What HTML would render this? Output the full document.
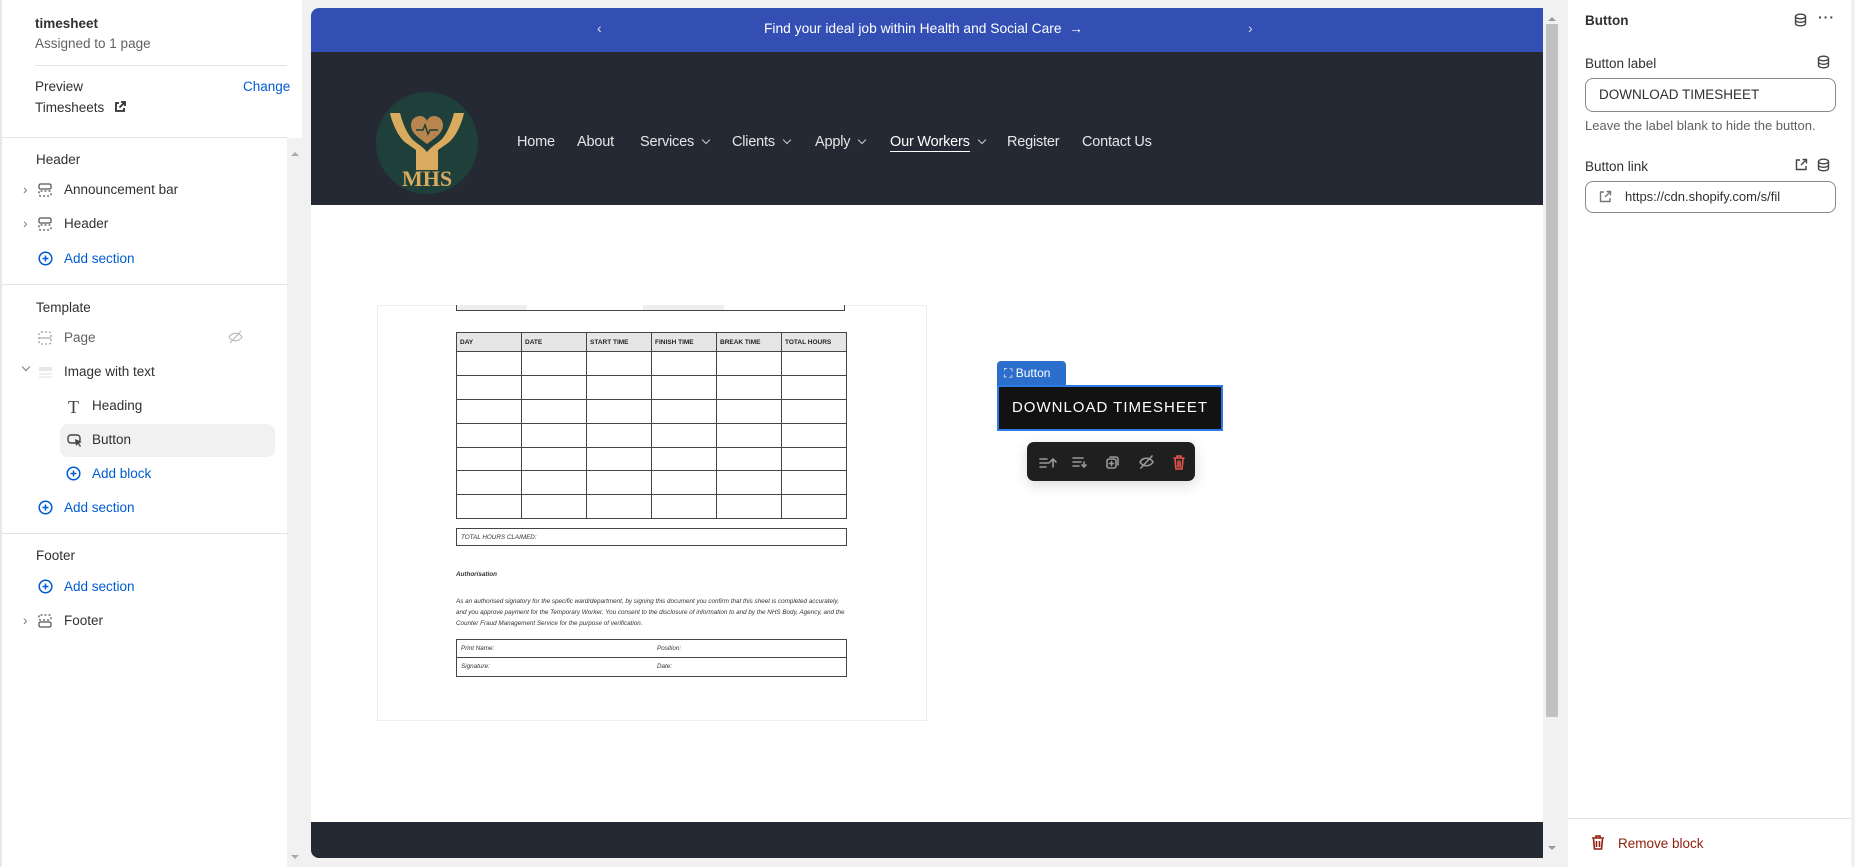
<!DOCTYPE html>
<html><head><meta charset="utf-8"><style>
*{box-sizing:border-box;margin:0;padding:0}
body{width:1855px;height:867px;background:#f1f1f1;font-family:"Liberation Sans",sans-serif;position:relative;overflow:hidden;color:#303030}
.a{position:absolute}
.lp{left:0;top:0;width:302px;height:867px;background:#fff;border-left:2px solid #e8e8e8}
.t{font-size:13.5px;white-space:nowrap;line-height:16px}
.blue{color:#005bd3}
.hr{height:1px;background:#e3e3e3}
.nav{color:#e6e6e6;font-size:14.5px;top:134px;white-space:nowrap;letter-spacing:-.2px}
.chev{display:inline-block;width:6px;height:6px;border-right:1px solid #ccc;border-bottom:1px solid #ccc;transform:rotate(45deg);margin-left:9px;position:relative;top:-3px}
table{border-collapse:collapse}
.tb td{border:1.3px solid #444;height:23.9px;width:54.8px;font-size:6.5px;font-weight:bold;padding-left:3px;color:#222}
.tb tr:first-child td{background:#e6e6e6;height:19px}
.it{font-style:italic;font-size:6.3px;color:#333}
</style></head><body>

<!-- left panel -->
<div class="a lp">
 <div class="a t" style="left:33px;top:16px;font-weight:bold;color:#303030">timesheet</div>
 <div class="a t" style="left:33px;top:36px;color:#616161">Assigned to 1 page</div>
 <div class="a hr" style="left:33px;top:65px;width:252px"></div>
 <div class="a t" style="left:33px;top:79px">Preview</div>
 <div class="a t blue" style="left:241px;top:79px">Change</div>
 <div class="a t" style="left:33px;top:100px">Timesheets <svg width="12" height="12" viewBox="0 0 12 12" style="margin-left:6px;vertical-align:-1px"><path d="M5 2H2v8h8V7M7 1h4v4M11 1L5.5 6.5" stroke="#303030" stroke-width="1.8" fill="none"/></svg></div>
 <div class="a hr" style="left:0;top:137px;width:285px"></div>
 <div class="a" style="left:285px;top:138px;width:17px;height:729px;background:#f1f1f1"></div>
 <div class="a" style="left:289px;top:148px;border:4px solid transparent;border-bottom:4px solid #aaa"></div>
 <div class="a" style="left:289px;top:855px;border:4px solid transparent;border-top:4px solid #aaa"></div>

 <div class="a t" style="left:34px;top:152px">Header</div>
 <div class="a t" style="left:21px;top:182px;color:#777">›</div>
 <svg class="a" style="left:36px;top:183px" width="14" height="14"><rect x="1" y="1" width="12" height="5" rx="1.5" fill="none" stroke="#555" stroke-width="1.3"/><rect x="1" y="8" width="12" height="5" rx="1.5" fill="none" stroke="#555" stroke-width="1.3" stroke-dasharray="2 2"/></svg>
 <div class="a t" style="left:62px;top:182px">Announcement bar</div>
 <div class="a t" style="left:21px;top:216px;color:#777">›</div>
 <svg class="a" style="left:36px;top:217px" width="14" height="14"><rect x="1" y="1" width="12" height="5" rx="1.5" fill="none" stroke="#555" stroke-width="1.3"/><rect x="1" y="8" width="12" height="5" rx="1.5" fill="none" stroke="#555" stroke-width="1.3" stroke-dasharray="2 2"/></svg>
 <div class="a t" style="left:62px;top:216px">Header</div>
 <svg class="a" style="left:36px;top:251px" width="15" height="15"><circle cx="7.5" cy="7.5" r="6.3" fill="none" stroke="#005bd3" stroke-width="1.5"/><path d="M7.5 4.5v6M4.5 7.5h6" stroke="#005bd3" stroke-width="1.5"/></svg>
 <div class="a t blue" style="left:62px;top:251px">Add section</div>
 <div class="a hr" style="left:0;top:284px;width:285px"></div>

 <div class="a t" style="left:34px;top:300px">Template</div>
 <svg class="a" style="left:36px;top:331px" width="14" height="14"><rect x="1" y="1" width="12" height="12" rx="2" fill="none" stroke="#999" stroke-width="1.2" stroke-dasharray="2 2"/><path d="M1 7h12" stroke="#999"/></svg>
 <div class="a t" style="left:62px;top:330px;color:#616161">Page</div>
 <svg class="a" style="left:226px;top:330px" width="15" height="14"><path d="M1 7c3-5 10-5 13 0c-3 5-10 5-13 0z" fill="none" stroke="#bbb" stroke-width="1.2"/><path d="M2 13L13 1" stroke="#bbb" stroke-width="1.2"/></svg>
 <div class="a" style="left:21px;top:364px;width:6px;height:6px;border-right:1.3px solid #777;border-bottom:1.3px solid #777;transform:rotate(45deg)"></div>
 <svg class="a" style="left:36px;top:366px" width="15" height="14"><rect x="1" y="1" width="13" height="4" fill="#e6e6e6"/><path d="M1 8h13M1 11h13" stroke="#ddd"/></svg>
 <div class="a t" style="left:62px;top:364px">Image with text</div>
 <div class="a" style="left:66px;top:397px;font-family:'Liberation Serif',serif;font-size:18px;color:#444">T</div>
 <div class="a t" style="left:90px;top:398px">Heading</div>
 <div class="a" style="left:58px;top:424px;width:215px;height:33px;background:#f1f1f1;border-radius:8px"></div>
 <svg class="a" style="left:65px;top:433px" width="16" height="15"><rect x="1" y="2" width="12" height="8" rx="3" fill="none" stroke="#444" stroke-width="1.4"/><path d="M8 6l7 3-3 1 2 3-1 1-2-3-2 2z" fill="#444"/></svg>
 <div class="a t" style="left:90px;top:432px">Button</div>
 <svg class="a" style="left:64px;top:466px" width="15" height="15"><circle cx="7.5" cy="7.5" r="6.3" fill="none" stroke="#005bd3" stroke-width="1.5"/><path d="M7.5 4.5v6M4.5 7.5h6" stroke="#005bd3" stroke-width="1.5"/></svg>
 <div class="a t blue" style="left:90px;top:466px">Add block</div>
 <svg class="a" style="left:36px;top:500px" width="15" height="15"><circle cx="7.5" cy="7.5" r="6.3" fill="none" stroke="#005bd3" stroke-width="1.5"/><path d="M7.5 4.5v6M4.5 7.5h6" stroke="#005bd3" stroke-width="1.5"/></svg>
 <div class="a t blue" style="left:62px;top:500px">Add section</div>
 <div class="a hr" style="left:0;top:533px;width:285px"></div>
 <div class="a t" style="left:34px;top:548px">Footer</div>
 <svg class="a" style="left:36px;top:579px" width="15" height="15"><circle cx="7.5" cy="7.5" r="6.3" fill="none" stroke="#005bd3" stroke-width="1.5"/><path d="M7.5 4.5v6M4.5 7.5h6" stroke="#005bd3" stroke-width="1.5"/></svg>
 <div class="a t blue" style="left:62px;top:579px">Add section</div>
 <div class="a t" style="left:21px;top:613px;color:#777">›</div>
 <svg class="a" style="left:36px;top:614px" width="14" height="14"><rect x="1" y="1" width="12" height="5" rx="1.5" fill="none" stroke="#555" stroke-width="1.3" stroke-dasharray="2 2"/><rect x="1" y="8" width="12" height="5" rx="1.5" fill="none" stroke="#555" stroke-width="1.3"/></svg>
 <div class="a t" style="left:62px;top:613px">Footer</div>
</div>

<!-- preview -->
<div class="a" style="left:311px;top:8px;width:1249px;height:850px;border-radius:8px;overflow:hidden;background:#fff">
 <div class="a" style="left:0;top:0;width:1232px;height:44px;background:#334fb4"></div>
 <div class="a" style="left:0;top:44px;width:1232px;height:153px;background:#252934"></div>
 <div class="a" style="left:0;top:814px;width:1232px;height:36px;background:#252934"></div>
 <div class="a" style="left:1232px;top:0;width:17px;height:850px;background:#f1f1f1"></div>
 <div class="a" style="left:1235px;top:16px;width:12px;height:693px;background:#c1c1c1"></div>
 <div class="a" style="left:1237px;top:5px;border:4px solid transparent;border-bottom:4px solid #999"></div>
 <div class="a" style="left:1237px;top:838px;border:4px solid transparent;border-top:4px solid #999"></div>
</div>
<div class="a" style="left:597px;top:20px;color:#ddd;font-size:14px">‹</div>
<div class="a" style="left:1248px;top:20px;color:#ddd;font-size:14px">›</div>
<div class="a" style="left:764px;top:21px;color:#fff;font-size:13.8px;white-space:nowrap">Find your ideal job within Health and Social Care &nbsp;→</div>

<!-- logo -->
<svg class="a" style="left:376px;top:92px" width="102" height="102" viewBox="0 0 102 102">
 <circle cx="51" cy="51" r="51" fill="#1e3f3a"/>
 <path d="M51 52c-8-6-16-11-16-19 0-6 5-9 9-9 3 0 6 2 7 5 1-3 4-5 7-5 4 0 9 3 9 9 0 8-8 13-16 19z" fill="#b8864d"/>
 <path d="M40 38h7l2-5 3 9 2-4h8" stroke="#1e3f3a" stroke-width="1.5" fill="none"/>
 <path d="M14 21c2 10 8 24 16 30l10 7v20h12V62c-2-5-9-9-15-14-5-5-10-15-13-27z" fill="#d9ab5e"/>
 <path d="M88 21c-2 10-8 24-16 30l-10 7v20H50V62c2-5 9-9 15-14 5-5 10-15 13-27z" fill="#d9ab5e"/>
 <text x="51" y="94" text-anchor="middle" font-family="Liberation Serif,serif" font-weight="bold" font-size="22" fill="#d9ab5e">MHS</text>
</svg>

<!-- nav -->
<div class="a nav" style="left:517px">Home</div>
<div class="a nav" style="left:577px">About</div>
<div class="a nav" style="left:640px">Services<span class="chev"></span></div>
<div class="a nav" style="left:732px">Clients<span class="chev"></span></div>
<div class="a nav" style="left:815px">Apply<span class="chev"></span></div>
<div class="a nav" style="left:890px;color:#fff"><span style="border-bottom:1px solid #fff;padding-bottom:1px">Our Workers</span><span class="chev"></span></div>
<div class="a nav" style="left:1007px">Register</div>
<div class="a nav" style="left:1082px">Contact Us</div>

<!-- document image -->
<div class="a" style="left:377px;top:305px;width:550px;height:416px;border:1px solid #eee;background:#fff"></div>
<div class="a" style="left:456px;top:305px;width:389px;height:6px;border:1.3px solid #444;border-top:none;background:linear-gradient(90deg,#eee 0 18%,#fff 18% 48%,#eee 48% 69%,#fff 69%)"></div>
<table class="a tb" style="left:456px;top:332px;width:391px">
<tr><td>DAY</td><td>DATE</td><td>START TIME</td><td>FINISH TIME</td><td>BREAK TIME</td><td>TOTAL HOURS</td></tr>
<tr><td></td><td></td><td></td><td></td><td></td><td></td></tr>
<tr><td></td><td></td><td></td><td></td><td></td><td></td></tr>
<tr><td></td><td></td><td></td><td></td><td></td><td></td></tr>
<tr><td></td><td></td><td></td><td></td><td></td><td></td></tr>
<tr><td></td><td></td><td></td><td></td><td></td><td></td></tr>
<tr><td></td><td></td><td></td><td></td><td></td><td></td></tr>
<tr><td></td><td></td><td></td><td></td><td></td><td></td></tr>
</table>
<div class="a it" style="left:456px;top:528px;width:391px;height:18px;border:1.3px solid #444;padding:5px 4px">TOTAL HOURS CLAIMED:</div>
<div class="a it" style="left:456px;top:571px;font-weight:bold">Authorisation</div>
<div class="a it" style="left:456px;top:596px;width:395px;line-height:11px">As an authorised signatory for the specific ward/department, by signing this document you confirm that this sheet is completed accurately, and you approve payment for the Temporary Worker. You consent to the disclosure of information to and by the NHS Body, Agency, and the Counter Fraud Management Service for the purpose of verification.</div>
<div class="a it" style="left:456px;top:639px;width:391px;height:38px;border:1.3px solid #444">
 <div class="a" style="left:0;top:17px;width:389px;height:1.3px;background:#444"></div>
 <div class="a" style="left:4px;top:5px">Print Name:</div><div class="a" style="left:200px;top:5px">Position:</div>
 <div class="a" style="left:4px;top:23px">Signature:</div><div class="a" style="left:200px;top:23px">Date:</div>
</div>

<!-- button -->
<div class="a" style="left:997px;top:361px;width:69px;height:24px;background:#2c6ecb;border-radius:4px 4px 0 0;color:#fff;font-size:12px;padding:5px 0 0 7px">⛶ Button</div>
<div class="a" style="left:997px;top:385px;width:226px;height:46px;background:#121212;border:2px solid #2c7be5;color:#fff;font-size:15px;letter-spacing:1px;text-align:center;line-height:42px">DOWNLOAD TIMESHEET</div>
<div class="a" style="left:1027px;top:442px;width:168px;height:39px;background:#1f1f1f;border-radius:7px;box-shadow:0 4px 14px rgba(0,0,0,.15)">
 <svg class="a" style="left:10px;top:11px" width="150" height="18" fill="none" stroke-width="1.6" stroke-linecap="round">
  <path d="M3 6h7M3 10h9M3 14h6M13 9l3-3 3 3M16 6v8" stroke="#999"/>
  <path d="M36 5h10M36 9h8M36 13h6M47 9v5M45 12l2 2 2-2" stroke="#999"/>
  <rect x="70" y="6" width="9" height="9" rx="2" stroke="#999"/><path d="M73 4h6a2 2 0 0 1 2 2v6" stroke="#999"/><path d="M74.5 8.5v4M72.5 10.5h4" stroke="#999"/>
  <path d="M103 9c3-5 10-5 13 0c-3 5-10 5-13 0zM104 15L115 3" stroke="#999"/>
  <path d="M137 5h10M140 5V3h4v2M138 6l1 10h6l1-10M141 8v6M143 8v6" stroke="#e5534b"/>
 </svg>
</div>

<!-- right panel -->
<div class="a" style="left:1568px;top:0;width:283px;height:867px;background:#fff">
 <div class="a t" style="left:17px;top:13px;font-weight:bold">Button</div>
 <svg class="a" style="left:226px;top:13px" width="13" height="14" fill="none" stroke="#444" stroke-width="1.4"><ellipse cx="6.5" cy="3.5" rx="5" ry="2.3"/><path d="M1.5 3.5v7c0 1.3 2.2 2.3 5 2.3s5-1 5-2.3v-7M1.5 7c0 1.3 2.2 2.3 5 2.3s5-1 5-2.3"/></svg>
 <div class="a" style="left:250px;top:9px;font-size:14px;font-weight:bold;color:#444;letter-spacing:1px">···</div>
 <div class="a t" style="left:17px;top:56px">Button label</div>
 <svg class="a" style="left:249px;top:55px" width="13" height="14" fill="none" stroke="#444" stroke-width="1.4"><ellipse cx="6.5" cy="3.5" rx="5" ry="2.3"/><path d="M1.5 3.5v7c0 1.3 2.2 2.3 5 2.3s5-1 5-2.3v-7M1.5 7c0 1.3 2.2 2.3 5 2.3s5-1 5-2.3"/></svg>
 <div class="a" style="left:17px;top:78px;width:251px;height:34px;border:1px solid #8a8a8a;border-radius:8px;font-size:13.5px;padding:8px 13px;color:#303030">DOWNLOAD TIMESHEET</div>
 <div class="a t" style="left:17px;top:118px;color:#616161;font-size:13px">Leave the label blank to hide the button.</div>
 <div class="a t" style="left:17px;top:159px">Button link</div>
 <svg class="a" style="left:227px;top:158px" width="13" height="13" fill="none" stroke="#444" stroke-width="1.4"><path d="M5 2H1.5v9.5H11V8M7.5 1.5h4v4M11.5 1.5L6 7"/></svg>
 <svg class="a" style="left:249px;top:158px" width="13" height="14" fill="none" stroke="#444" stroke-width="1.4"><ellipse cx="6.5" cy="3.5" rx="5" ry="2.3"/><path d="M1.5 3.5v7c0 1.3 2.2 2.3 5 2.3s5-1 5-2.3v-7M1.5 7c0 1.3 2.2 2.3 5 2.3s5-1 5-2.3"/></svg>
 <div class="a" style="left:17px;top:181px;width:251px;height:32px;border:1px solid #8a8a8a;border-radius:8px;font-size:13px;padding:7px 0 0 39px;color:#303030;overflow:hidden;white-space:nowrap">https://cdn.shopify.com/s/fil</div>
 <svg class="a" style="left:31px;top:190px" width="13" height="13" fill="none" stroke="#777" stroke-width="1.4"><path d="M5 2H1.5v9.5H11V8M7.5 1.5h4v4M11.5 1.5L6 7"/></svg>
 <div class="a hr" style="left:0;top:818px;width:283px"></div>
 <svg class="a" style="left:23px;top:834px" width="14" height="16" fill="none" stroke="#8e1f0b" stroke-width="1.6"><path d="M1 4h12M5 4V2h4v2M2.5 5l1 10h7l1-10M5.5 7v6M8.5 7v6"/></svg>
 <div class="a t" style="left:50px;top:836px;color:#8e1f0b">Remove block</div>
</div>
</body></html>
